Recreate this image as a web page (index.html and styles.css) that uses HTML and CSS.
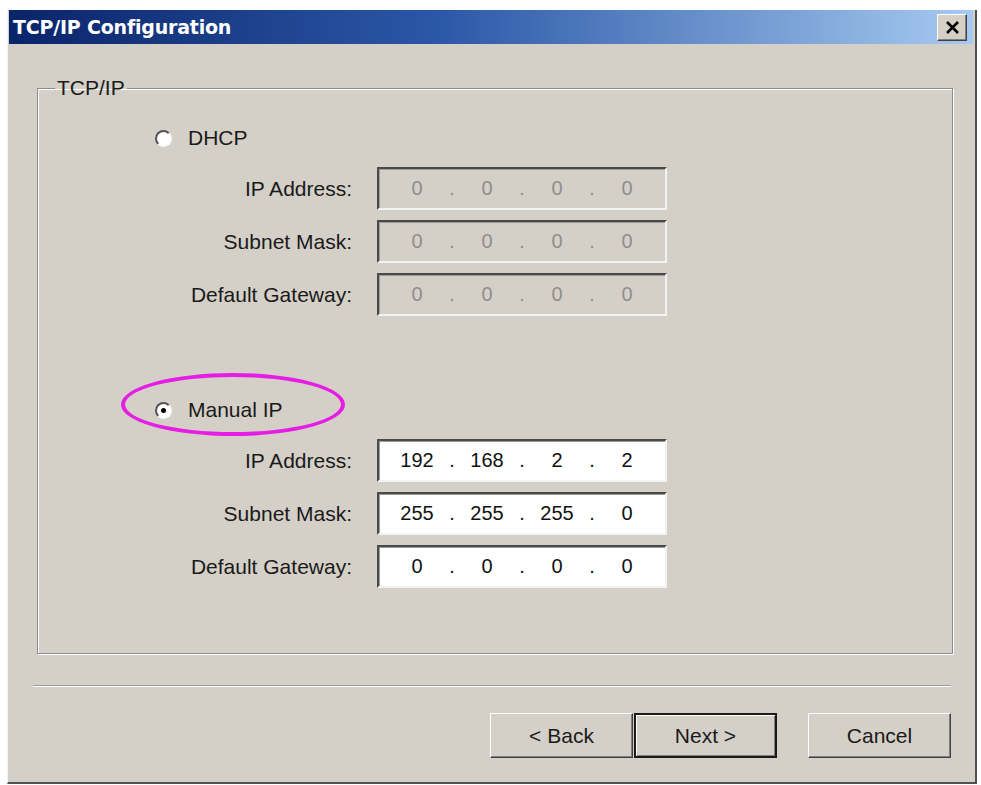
FILE: index.html
```html
<!DOCTYPE html>
<html>

<head>
    <meta charset="utf-8">
    <title>TCP/IP Configuration</title>
    <link rel="stylesheet" href="styles.css">
</head>

<body>
    <div class="window">
        <div class="titlebar">
            <span class="title">TCP/IP Configuration</span>
            <button class="close-btn" title="Close">
                <svg width="15" height="13" viewBox="0 0 15 13">
                    <path d="M2 1 L13 12 M13 1 L2 12" stroke="#000" stroke-width="2.6" fill="none" />
                </svg>
            </button>
        </div>

        <div class="content">
            <fieldset class="group">
                <legend>TCP/IP</legend>

                <!-- DHCP -->
                <div class="radio-row dhcp">
                    <span class="radio"></span>
                    <span>DHCP</span>
                </div>

                <div class="field-row first">
                    <label>IP Address:</label>
                    <div class="ipbox disabled">
                        <span class="oct">0</span><span class="dot">.</span><span class="oct">0</span><span class="dot">.</span><span class="oct">0</span><span class="dot">.</span><span class="oct">0</span>
                    </div>
                </div>
                <div class="field-row">
                    <label>Subnet Mask:</label>
                    <div class="ipbox disabled">
                        <span class="oct">0</span><span class="dot">.</span><span class="oct">0</span><span class="dot">.</span><span class="oct">0</span><span class="dot">.</span><span class="oct">0</span>
                    </div>
                </div>
                <div class="field-row">
                    <label>Default Gateway:</label>
                    <div class="ipbox disabled">
                        <span class="oct">0</span><span class="dot">.</span><span class="oct">0</span><span class="dot">.</span><span class="oct">0</span><span class="dot">.</span><span class="oct">0</span>
                    </div>
                </div>

                <!-- Manual IP -->
                <div class="radio-row manual">
                    <span class="highlight"></span>
                    <span class="radio checked"></span>
                    <span>Manual IP</span>
                </div>

                <div class="field-row first">
                    <label>IP Address:</label>
                    <div class="ipbox">
                        <span class="oct">192</span><span class="dot">.</span><span class="oct">168</span><span class="dot">.</span><span class="oct">2</span><span class="dot">.</span><span class="oct">2</span>
                    </div>
                </div>
                <div class="field-row">
                    <label>Subnet Mask:</label>
                    <div class="ipbox">
                        <span class="oct">255</span><span class="dot">.</span><span class="oct">255</span><span class="dot">.</span><span class="oct">255</span><span class="dot">.</span><span class="oct">0</span>
                    </div>
                </div>
                <div class="field-row">
                    <label>Default Gateway:</label>
                    <div class="ipbox">
                        <span class="oct">0</span><span class="dot">.</span><span class="oct">0</span><span class="dot">.</span><span class="oct">0</span><span class="dot">.</span><span class="oct">0</span>
                    </div>
                </div>
            </fieldset>

            <div class="separator"></div>

            <div class="buttons">
                <div class="nav-btns">
                    <button class="btn">&lt; Back</button>
                    <button class="btn default">Next &gt;</button>
                </div>
                <button class="btn">Cancel</button>
            </div>
        </div>
    </div>
</body>

</html>
```

FILE: styles.css
```css
body {
    margin: 0;
    background: #fff;
    font-family: "Liberation Sans", Arial, sans-serif;
}

.window {
    box-sizing: border-box;
    width: 970px;
    height: 774px;
    margin: 10px 0 0 7px;
    padding: 0 2px 0 1px;
    background: #d4d0c8;
    border-left: 1px solid #f4f4f2;
    border-right: 2px solid #505050;
    border-bottom: 2px solid #505050;
    display: flex;
    flex-direction: column;
}

.titlebar {
    height: 34px;
    background: linear-gradient(to right, #0a246a 0%, #2c58a8 45%, #a6caf0 100%);
    display: flex;
    align-items: center;
    justify-content: space-between;
    padding: 0 6px 0 4px;
}

.title {
    color: #fff;
    font-family: "DejaVu Sans", sans-serif;
    font-weight: bold;
    font-size: 19px;
    letter-spacing: -0.2px;
}

.close-btn {
    width: 30px;
    height: 27px;
    padding: 0;
    background: #d4d0c8;
    border: 1px solid;
    border-color: #fff #404040 #404040 #fff;
    box-shadow: inset -1px -1px 0 #808080;
    display: flex;
    align-items: center;
    justify-content: center;
}

.content {
    flex: 1;
    display: flex;
    flex-direction: column;
    font-size: 21px;
    color: #1a1a1a;
}

/* group box */
.group {
    margin: 32px 20px 0 28px;
    padding: 0;
    height: 576px;
    border: 1px solid #8c8c8c;
    box-shadow: inset 1px 1px 0 #fff, 1px 1px 0 #fff;
    min-width: 0;
}

.group legend {
    margin-left: 17px;
    padding: 0 2px;
    line-height: 24px;
}

.radio-row {
    position: relative;
    display: flex;
    align-items: center;
    gap: 16px;
    height: 24px;
    margin-left: 117px;
}

.radio-row.dhcp {
    margin-top: 26px;
}

.radio-row.manual {
    margin-top: 82px;
}

.radio {
    box-sizing: border-box;
    width: 17px;
    height: 17px;
    border-radius: 50%;
    border: 2px solid;
    border-color: #555 #fafafa #fafafa #555;
    background: #fff;
    display: flex;
    align-items: center;
    justify-content: center;
}

.radio.checked::after {
    content: "";
    width: 5px;
    height: 5px;
    border-radius: 50%;
    background: #000;
}

.highlight {
    position: absolute;
    left: -34px;
    top: -25px;
    width: 216px;
    height: 55px;
    border: 4px solid #e51de5;
    border-radius: 50%;
}

.field-row {
    display: flex;
    align-items: center;
    margin-top: 10px;
}

.field-row.first {
    margin-top: 17px;
}

.field-row label {
    width: 314px;
    text-align: right;
}

.ipbox {
    box-sizing: border-box;
    margin-left: 25px;
    width: 290px;
    height: 43px;
    padding-left: 6px;
    background: #fff;
    border: 2px solid;
    border-color: #4a4a4a #f2f2f2 #f2f2f2 #4a4a4a;
    box-shadow: inset 1px 1px 0 #9a9a9a;
    display: flex;
    align-items: center;
    font-size: 20px;
    color: #111;
}

.ipbox.disabled {
    background: #d4d0c8;
    color: #8e8e8e;
}

.oct {
    width: 64px;
    text-align: center;
}

.dot {
    width: 6px;
    text-align: center;
}

.separator {
    margin: 31px 22px 0 24px;
    height: 1px;
    background: #9a9a9a;
    border-bottom: 1px solid #fff;
}

.buttons {
    display: flex;
    justify-content: flex-end;
    gap: 31px;
    margin-top: 26px;
    padding-right: 22px;
}

.nav-btns {
    display: flex;
    gap: 1px;
}

.btn {
    box-sizing: border-box;
    width: 143px;
    height: 45px;
    background: #d4d0c8;
    border: 1px solid;
    border-color: #fff #404040 #404040 #fff;
    box-shadow: inset -1px -1px 0 #808080;
    font-family: "Liberation Sans", Arial, sans-serif;
    font-size: 21px;
    color: #1a1a1a;
}

.btn.default {
    border: 2px solid #1a1a1a;
    box-shadow: inset 1px 1px 0 #fff, inset -1px -1px 0 #808080;
}
```
